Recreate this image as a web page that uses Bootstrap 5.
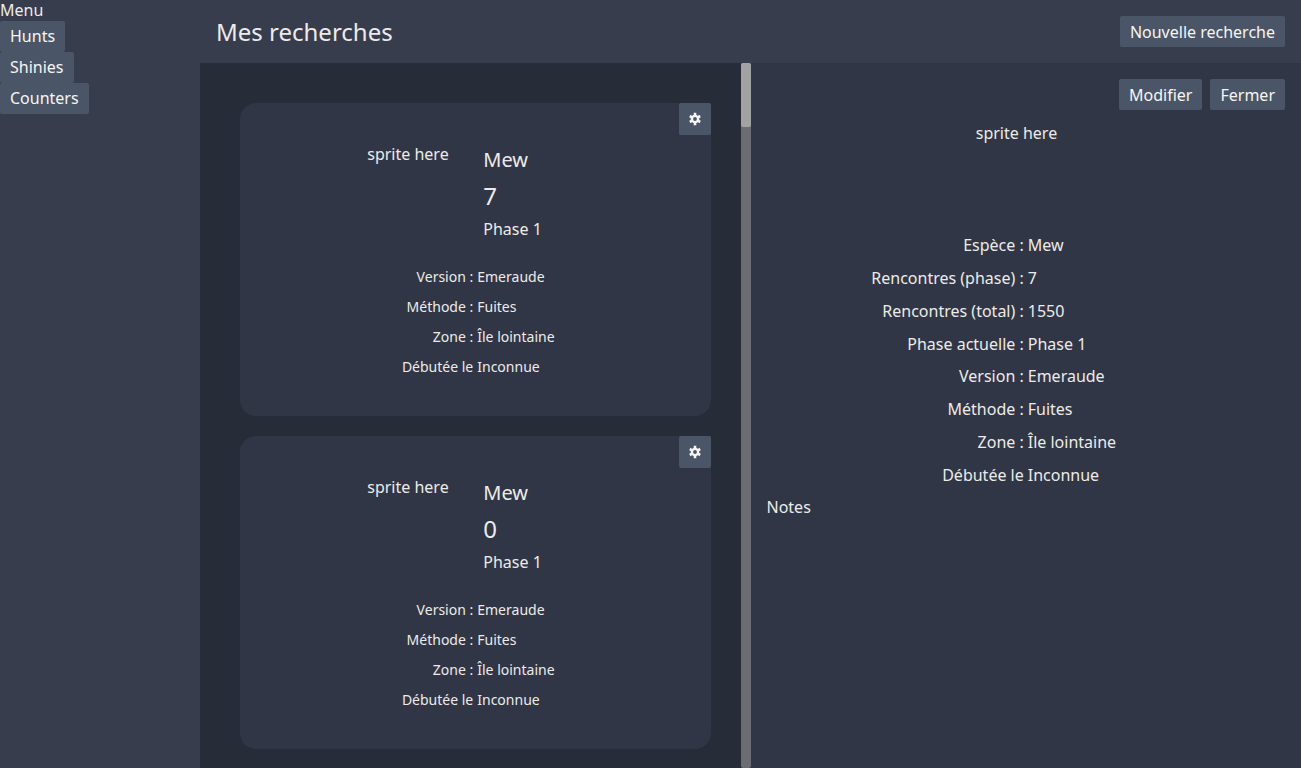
<!DOCTYPE html>
<html lang="fr">
<head>
<meta charset="utf-8">
<meta name="viewport" content="width=device-width, initial-scale=1">
<title>Mes recherches</title>
<link rel="stylesheet" href="https://cdn.jsdelivr.net/npm/bootstrap@5.3.0/dist/css/bootstrap.min.css">
<style>
  body { background: #373d4c; color: #edebe8; font: 16px/22px "Noto Sans", sans-serif; }
  .side-menu { width: 200px; }
  .menu-label { line-height: 21px; }
  .btn-slate {
    --bs-btn-color: #f7f5f2; --bs-btn-bg: #4a5568; --bs-btn-border-width: 0;
    --bs-btn-hover-color: #fff; --bs-btn-hover-bg: #5a6680;
    --bs-btn-active-color: #fff; --bs-btn-active-bg: #414b5c;
    --bs-btn-padding-x: 10px; --bs-btn-padding-y: 4px;
    --bs-btn-font-size: 16px; --bs-btn-line-height: 23px; --bs-btn-border-radius: 2px;
  }
  .btn-action { --bs-btn-line-height: 22px; padding-top: 5px; }
  .page-title { font-size: 24px; line-height: 31px; font-weight: 400; }
  .hunt-list { background: #272c39; }
  .hunt-items { padding: 40px 30px 40px 40px; gap: 20px; }
  .scroll-track { width: 10px; background: #6c6d70; border-radius: 2px; }
  .scroll-thumb { height: 64px; background: #a2a2a4; border-radius: 2px; }
  .hunt-card { background: #303646; border-radius: 16px; padding: 40px; }
  .btn-gear { width: 32px; height: 32px; --bs-btn-padding-x: 0; --bs-btn-padding-y: 0; }
  .sprite-box, .hunt-summary { width: 100px; height: 100px; }
  .species { font-size: 20px; line-height: 27px; font-weight: 400; }
  .count { font-size: 24px; line-height: 33px; }
  .facts { display: grid; grid-template-columns: 1fr 1fr; column-gap: 4px; align-items: center; }
  .facts dt { font-weight: 400; text-align: right; }
  .facts dd { margin: 0; }
  .hunt-card .facts { font-size: 14px; line-height: 19px; row-gap: 11px; margin: 24px 0 0; }
  .detail-panel { background: #303646; }
  .detail-panel .facts { height: 262px; grid-auto-rows: 1fr; margin: 11px 0 5px; }
</style>
</head>
<body>
<svg class="d-none" aria-hidden="true">
  <symbol id="gear" viewBox="0 0 14 14">
    <circle cx="7" cy="7" r="3.1" fill="none" stroke="currentColor" stroke-width="2.4"/>
    <path d="M7 3.6V.8M7 10.4v2.8M9.9 5.3l2.3-1.3M4.1 8.7 1.8 10M9.9 8.7l2.3 1.3M4.1 5.3 1.8 4" fill="none" stroke="currentColor" stroke-width="2.6"/>
  </symbol>
</svg>
<div class="d-flex vh-100 overflow-hidden">
  <nav class="side-menu flex-shrink-0 d-flex flex-column align-items-start" aria-label="Menu">
    <div class="menu-label">Menu</div>
    <button type="button" class="btn btn-slate">Hunts</button>
    <button type="button" class="btn btn-slate">Shinies</button>
    <button type="button" class="btn btn-slate">Counters</button>
  </nav>
  <div class="flex-grow-1 d-flex flex-column">
    <header class="d-flex justify-content-between align-items-center p-3">
      <h1 class="page-title m-0">Mes recherches</h1>
      <button type="button" class="btn btn-slate btn-action">Nouvelle recherche</button>
    </header>
    <main class="row g-0 flex-grow-1 overflow-hidden">
      <section class="hunt-list col-6 h-100 d-flex overflow-hidden" aria-label="Recherches">
        <div class="hunt-items flex-grow-1 d-flex flex-column">
          <article class="hunt-card position-relative">
            <button type="button" class="btn btn-slate btn-gear position-absolute top-0 end-0 d-flex align-items-center justify-content-center" aria-label="Options">
              <svg width="14" height="14" aria-hidden="true"><use href="#gear"/></svg>
            </button>
            <div class="d-flex justify-content-center gap-3">
              <div class="sprite-box">sprite here</div>
              <div class="hunt-summary d-flex flex-column justify-content-around">
                <h2 class="species m-0">Mew</h2>
                <div class="count">7</div>
                <div>Phase 1</div>
              </div>
            </div>
            <dl class="facts">
              <dt>Version :</dt><dd>Emeraude</dd>
              <dt>Méthode :</dt><dd>Fuites</dd>
              <dt>Zone :</dt><dd>Île lointaine</dd>
              <dt>Débutée le</dt><dd>Inconnue</dd>
            </dl>
          </article>
          <article class="hunt-card position-relative">
            <button type="button" class="btn btn-slate btn-gear position-absolute top-0 end-0 d-flex align-items-center justify-content-center" aria-label="Options">
              <svg width="14" height="14" aria-hidden="true"><use href="#gear"/></svg>
            </button>
            <div class="d-flex justify-content-center gap-3">
              <div class="sprite-box">sprite here</div>
              <div class="hunt-summary d-flex flex-column justify-content-around">
                <h2 class="species m-0">Mew</h2>
                <div class="count">0</div>
                <div>Phase 1</div>
              </div>
            </div>
            <dl class="facts">
              <dt>Version :</dt><dd>Emeraude</dd>
              <dt>Méthode :</dt><dd>Fuites</dd>
              <dt>Zone :</dt><dd>Île lointaine</dd>
              <dt>Débutée le</dt><dd>Inconnue</dd>
            </dl>
          </article>
        </div>
        <div class="scroll-track flex-shrink-0" aria-hidden="true"><div class="scroll-thumb"></div></div>
      </section>
      <section class="detail-panel col-6 h-100 p-3" aria-label="Détail">
        <div class="d-flex justify-content-end gap-2">
          <button type="button" class="btn btn-slate btn-action">Modifier</button>
          <button type="button" class="btn btn-slate btn-action">Fermer</button>
        </div>
        <div class="sprite-box mx-auto mt-2 pt-1">sprite here</div>
        <dl class="facts">
          <dt>Espèce :</dt><dd>Mew</dd>
          <dt>Rencontres (phase) :</dt><dd>7</dd>
          <dt>Rencontres (total) :</dt><dd>1550</dd>
          <dt>Phase actuelle :</dt><dd>Phase 1</dd>
          <dt>Version :</dt><dd>Emeraude</dd>
          <dt>Méthode :</dt><dd>Fuites</dd>
          <dt>Zone :</dt><dd>Île lointaine</dd>
          <dt>Débutée le</dt><dd>Inconnue</dd>
        </dl>
        <div>Notes</div>
      </section>
    </main>
  </div>
</div>
<script src="https://cdn.jsdelivr.net/npm/bootstrap@5.3.0/dist/js/bootstrap.bundle.min.js"></script>
</body>
</html>
